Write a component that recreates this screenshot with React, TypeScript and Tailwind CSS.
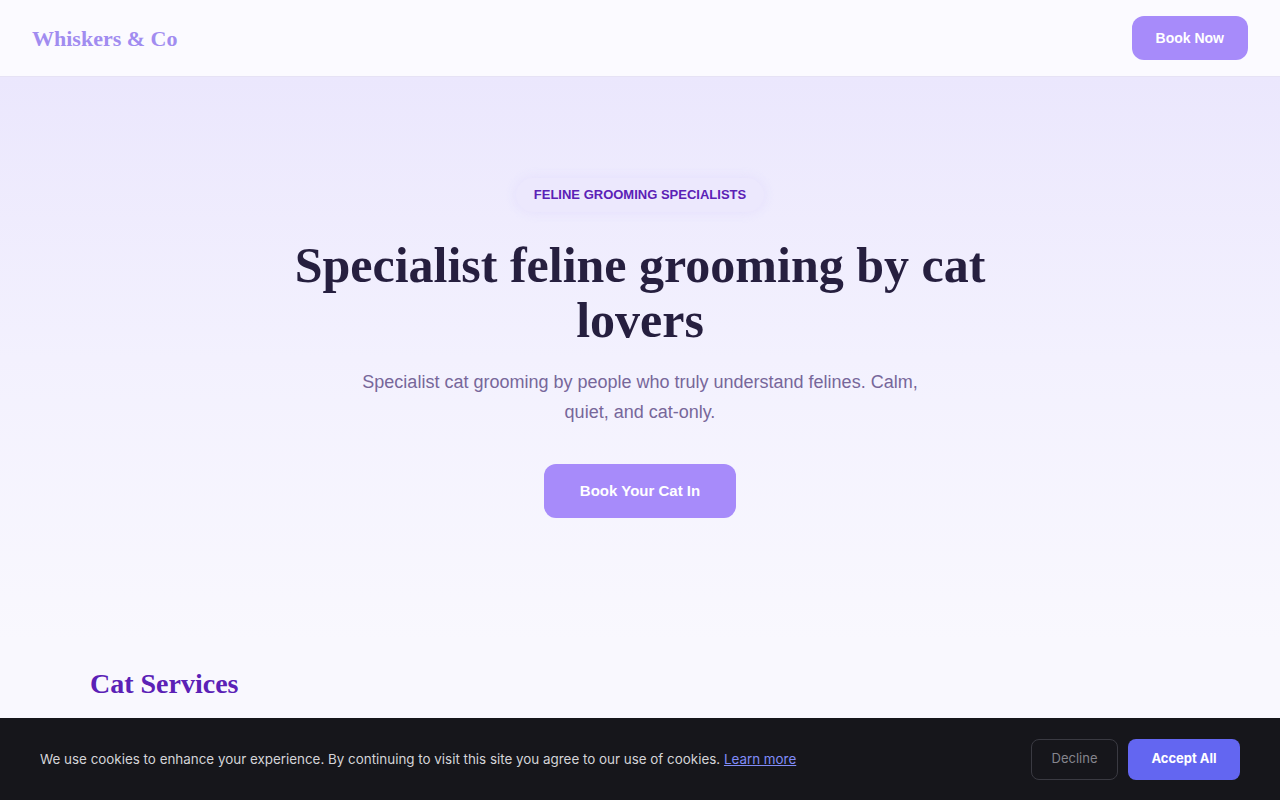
export default function App() {
  return (
    <div className="min-h-screen bg-[#f9f8fe] font-['Liberation_Sans',sans-serif]">
      <header className="flex h-[77px] items-center justify-between border-b border-[#e6e2f5] bg-[#fbfaff] px-8">
        <div className="font-['Liberation_Serif',serif] text-[22px] font-bold text-[#a18cf0]">Whiskers &amp; Co</div>
        <button className="h-11 rounded-xl bg-[#a78bfa] px-6 text-[14px] font-bold text-white">Book Now</button>
      </header>

      <section className="bg-gradient-to-b from-[#ebe7fd] via-[#f3f1fe] to-[#f9f8fe] px-8 pb-[122px] pt-[101px] text-center">
        <div className="flex flex-col items-center">
          <span className="rounded-full bg-[#ece8fd] px-[18px] py-[9px] text-[13px] font-bold leading-4 text-[#5b21b6] shadow-[0_0_12px_rgba(221,214,254,0.6)]">
            FELINE GROOMING SPECIALISTS
          </span>
          <h1 className="mt-[26px] max-w-[720px] font-['Liberation_Serif',serif] text-[50px] font-bold leading-[55px] text-[#261f3f]">
            Specialist feline grooming by cat lovers
          </h1>
          <p className="mt-[19px] max-w-[570px] text-[18px] leading-[30px] text-[#77679a]">
            Specialist cat grooming by people who truly understand felines. Calm, quiet, and cat-only.
          </p>
          <button className="mt-[37px] h-[54px] w-[192px] rounded-xl bg-[#a78bfa] text-[15px] font-bold text-white">
            Book Your Cat In
          </button>
        </div>
      </section>

      <section className="px-[90px] pb-24 pt-[23px]">
        <h2 className="font-['Liberation_Serif',serif] text-[28px] font-bold text-[#5b21b6]">Cat Services</h2>
      </section>

      <div className="fixed bottom-0 left-0 right-0 flex h-[82px] items-center justify-between bg-[#16161b] px-10 font-['Inter',sans-serif]">
        <p className="text-[13.4px] text-[#d4d4d8]">
          We use cookies to enhance your experience. By continuing to visit this site you agree to our use of cookies.{" "}
          <a className="text-[#818cf8] underline">Learn more</a>
        </p>
        <div className="flex gap-[10px]">
          <button className="h-[41px] w-[87px] rounded-lg border border-[#3a3a42] text-[13px] text-[#85858d]">Decline</button>
          <button className="h-[41px] w-[112px] rounded-lg bg-[#6366f1] text-[13px] font-bold text-white">Accept All</button>
        </div>
      </div>
    </div>
  );
}
